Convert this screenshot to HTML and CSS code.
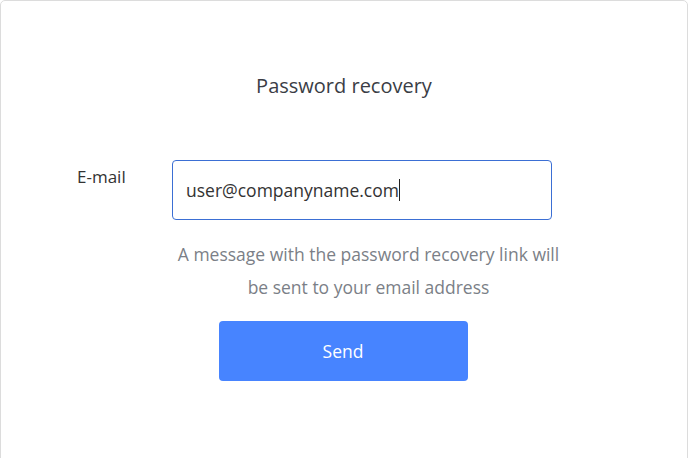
FILE: index.html
```html
<!DOCTYPE html>
<html>
<head>
<meta charset="utf-8">
<link rel="stylesheet" href="styles.css">
</head>
<body>
<div class="card">
  <h1 class="title">Password recovery</h1>
  <div class="row">
    <label class="label">E-mail</label>
    <div class="field"><span class="value">user@companyname.com</span><span class="caret"></span></div>
  </div>
  <p class="hint">A message with the password recovery link will<br>be sent to your email address</p>
  <div class="actions"><button class="btn">Send</button></div>
</div>
</body>
</html>
```
FILE: styles.css
```css
html, body { margin: 0; padding: 0; background: #fff; }
body { font-family: "Open Sans", "Noto Sans", sans-serif; color: #333; }
.card {
  box-sizing: border-box;
  width: 688px;
  height: 470px;
  border: 1px solid #dcdcdc;
  border-radius: 5px 5px 0 0;
  padding-top: 72px;
}
.title {
  margin: 0;
  text-align: center;
  font-size: 20px;
  font-weight: 400;
  line-height: 26px;
  color: #3a3d45;
}
.row {
  display: flex;
  align-items: flex-start;
  margin-top: 61px;
  padding-left: 76px;
}
.label {
  width: 95px;
  font-size: 17px;
  line-height: 22px;
  padding-top: 6px;
  color: #333;
}
.field {
  box-sizing: border-box;
  width: 380px;
  height: 60px;
  border: 1px solid #3b6fd4;
  border-radius: 4px;
  display: flex;
  align-items: center;
  padding-left: 13px;
  font-size: 17.5px;
  color: #333;
}
.caret { display: inline-block; width: 1px; height: 22px; background: #222; margin-left: 0; }
.hint {
  margin: 18px 0 0 0;
  padding-left: 174px;
  width: 387px;
  text-align: center;
  font-size: 17.5px;
  line-height: 33px;
  color: #7b7f87;
}
.actions { display: flex; justify-content: center; margin-top: 17px; padding-right: 2px; }
.btn {
  width: 249px;
  height: 60px;
  border: none;
  border-radius: 4px;
  background: #4784ff;
  color: #fff;
  font-family: inherit;
  font-size: 17.5px;
}
```
